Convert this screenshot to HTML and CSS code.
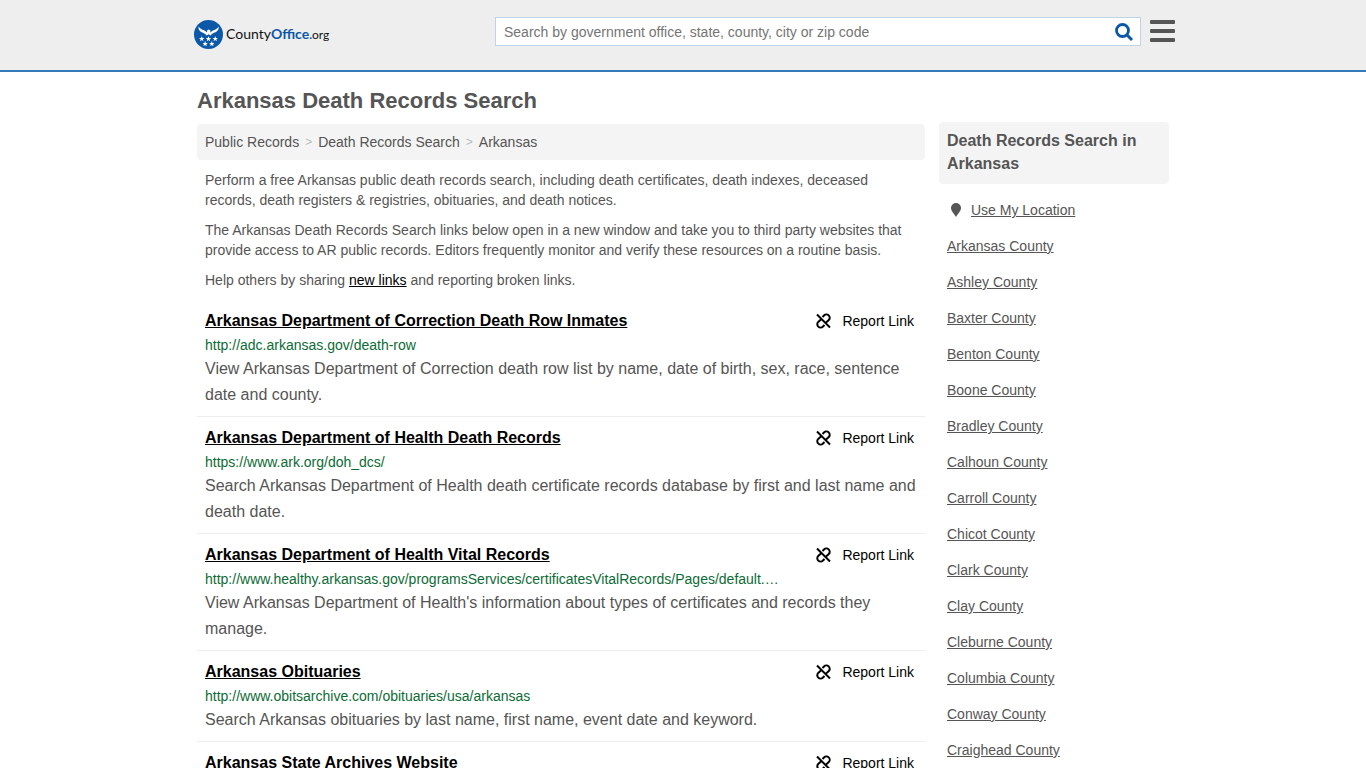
FILE: index.html
```html
<!DOCTYPE html>
<html lang="en">
<head>
    <meta charset="UTF-8">
    <meta name="viewport" content="width=device-width, initial-scale=1.0">
    <title>Arkansas Death Records Search</title>
    <link rel="stylesheet" href="styles.css">
</head>
<body>
    <!-- Shared icons -->
    <svg class="sprite" aria-hidden="true">
        <symbol id="unlink" viewBox="0 0 16 16">
            <g fill="none" stroke="#000" stroke-width="2">
                <path d="M2 1.500l13 13"/>
                <path d="M7.500 4l1.500-1.500a3.300 3.300 0 0 1 4.800 4.600L10.500 10"/>
                <path d="M9.500 12l-1.500 1.500a3.300 3.300 0 0 1-4.800-4.600L6.500 6"/>
            </g>
        </symbol>
        <symbol id="star" viewBox="0 0 10 10">
            <path fill="#fff" d="M5 0l1.300 3.500 3.700.1-2.900 2.300L8.100 9.500 5 7.400 1.900 9.500l1-3.600L0 3.600l3.700-.1z"/>
        </symbol>
    </svg>

    <header class="header">
        <div class="header-inner">
            <a class="logo" href="#">
                <svg class="logo-mark" viewBox="0 0 29 29" aria-hidden="true">
                    <circle cx="14.500" cy="14.500" r="14.500" fill="#0b57a8"/>
                    <path fill="#fff" d="M4.500 6.500c1.500 2.500 4 3.300 6.500 4.200l2 1.800.2-2.300 1.500-.7 1.600.8.1 2.200 2-1.800c2.500-.9 5-1.700 6.300-4.200.3 3-1 4.700-3.200 5.700-2 .9-3.700 1.100-4.800 3.300L14.500 14.300l-2 1.200c-1.200-2.200-3-2.400-4.900-3.300C5.500 11.200 4.200 9.500 4.500 6.500z"/>
                    <use href="#star" x="5" y="16" width="5.500" height="5.500"/>
                    <use href="#star" x="11.700" y="16" width="5.500" height="5.500"/>
                    <use href="#star" x="18.500" y="16" width="5.500" height="5.500"/>
                    <use href="#star" x="8.400" y="21" width="5.500" height="5.500"/>
                    <use href="#star" x="15.100" y="21" width="5.500" height="5.500"/>
                </svg>
                <span class="logo-text">County<b>Office</b><span class="logo-org"><b>.</b>org</span></span>
            </a>
            <form class="search">
                <input class="search-input" type="text" aria-label="Search" placeholder="Search by government office, state, county, city or zip code">
                <button class="search-btn" type="submit" aria-label="Search">
                    <svg width="20" height="20" viewBox="0 0 20 20" fill="none" stroke="#0b57a8">
                        <circle cx="8.500" cy="8.500" r="6" stroke-width="2.800"/>
                        <path d="M12.500 12.500l5.500 5.500" stroke-width="3"/>
                    </svg>
                </button>
            </form>
            <button class="menu-btn" type="button" aria-label="Menu">
                <svg width="25" height="22" viewBox="0 0 25 22" fill="#555">
                    <rect width="25" height="4" rx="1"/>
                    <rect y="9" width="25" height="4" rx="1"/>
                    <rect y="18" width="25" height="4" rx="1"/>
                </svg>
            </button>
        </div>
    </header>

    <div class="container">
        <main class="main">
            <h1>Arkansas Death Records Search</h1>
            <nav class="breadcrumb">
                <a href="#">Public Records</a>
                <span class="sep">&gt;</span>
                <a href="#">Death Records Search</a>
                <span class="sep">&gt;</span>
                <a href="#">Arkansas</a>
            </nav>
            <div class="intro">
                <p>Perform a free Arkansas public death records search, including death certificates, death indexes, deceased records, death registers &amp; registries, obituaries, and death notices.</p>
                <p>The Arkansas Death Records Search links below open in a new window and take you to third party websites that provide access to AR public records. Editors frequently monitor and verify these resources on a routine basis.</p>
                <p>Help others by sharing <a href="#">new links</a> and reporting broken links.</p>
            </div>

            <div class="record">
                <div class="record-head">
                    <a class="record-title" href="#">Arkansas Department of Correction Death Row Inmates</a>
                    <a class="report" href="#"><svg class="report-icon"><use href="#unlink"/></svg>Report Link</a>
                </div>
                <div class="record-url">http://adc.arkansas.gov/death-row</div>
                <div class="record-desc">View Arkansas Department of Correction death row list by name, date of birth, sex, race, sentence date and county.</div>
            </div>
            <div class="record">
                <div class="record-head">
                    <a class="record-title" href="#">Arkansas Department of Health Death Records</a>
                    <a class="report" href="#"><svg class="report-icon"><use href="#unlink"/></svg>Report Link</a>
                </div>
                <div class="record-url">https://www.ark.org/doh_dcs/</div>
                <div class="record-desc">Search Arkansas Department of Health death certificate records database by first and last name and death date.</div>
            </div>
            <div class="record">
                <div class="record-head">
                    <a class="record-title" href="#">Arkansas Department of Health Vital Records</a>
                    <a class="report" href="#"><svg class="report-icon"><use href="#unlink"/></svg>Report Link</a>
                </div>
                <div class="record-url">http://www.healthy.arkansas.gov/programsServices/certificatesVitalRecords/Pages/default.…</div>
                <div class="record-desc">View Arkansas Department of Health's information about types of certificates and records they manage.</div>
            </div>
            <div class="record">
                <div class="record-head">
                    <a class="record-title" href="#">Arkansas Obituaries</a>
                    <a class="report" href="#"><svg class="report-icon"><use href="#unlink"/></svg>Report Link</a>
                </div>
                <div class="record-url">http://www.obitsarchive.com/obituaries/usa/arkansas</div>
                <div class="record-desc">Search Arkansas obituaries by last name, first name, event date and keyword.</div>
            </div>
            <div class="record">
                <div class="record-head">
                    <a class="record-title" href="#">Arkansas State Archives Website</a>
                    <a class="report" href="#"><svg class="report-icon"><use href="#unlink"/></svg>Report Link</a>
                </div>
            </div>
        </main>

        <aside class="sidebar">
            <h2>Death Records Search in Arkansas</h2>
            <ul>
                <li>
                    <svg class="pin" viewBox="0 0 10 14"><path fill="#555" d="M5 0a5 5 0 0 1 5 5c0 3-3 5.500-5 9C3 10.500 0 8 0 5a5 5 0 0 1 5-5z"/></svg>
                    <a href="#">Use My Location</a>
                </li>
                <li><a href="#">Arkansas County</a></li>
                <li><a href="#">Ashley County</a></li>
                <li><a href="#">Baxter County</a></li>
                <li><a href="#">Benton County</a></li>
                <li><a href="#">Boone County</a></li>
                <li><a href="#">Bradley County</a></li>
                <li><a href="#">Calhoun County</a></li>
                <li><a href="#">Carroll County</a></li>
                <li><a href="#">Chicot County</a></li>
                <li><a href="#">Clark County</a></li>
                <li><a href="#">Clay County</a></li>
                <li><a href="#">Cleburne County</a></li>
                <li><a href="#">Columbia County</a></li>
                <li><a href="#">Conway County</a></li>
                <li><a href="#">Craighead County</a></li>
            </ul>
        </aside>
    </div>
</body>
</html>
```
FILE: styles.css
```css
* {
    box-sizing: border-box;
}
body {
    margin: 0;
    font-family: "Liberation Sans", Arial, sans-serif;
    font-size: 14px;
    line-height: 20px;
    color: #555;
    background: #fff;
}
a {
    color: inherit;
}
button {
    padding: 0;
    border: none;
    background: none;
    cursor: pointer;
}
svg {
    display: block;
}
.sprite {
    display: none;
}

/* Header */
.header {
    background: #eee;
    border-bottom: 2px solid #337ab7;
}
.header-inner {
    display: flex;
    align-items: flex-start;
    max-width: 984px;
    height: 70px;
    margin: 0 auto;
    padding: 17px 0 0 3px;
}
.logo {
    display: flex;
    align-items: center;
    gap: 3px;
    padding-top: 3px;
    text-decoration: none;
    color: #111;
}
.logo-mark {
    width: 29px;
    height: 29px;
}
.logo-text {
    font-family: Lato, sans-serif;
    font-size: 14px;
}
.logo-text b {
    color: #0b57a8;
}
.logo-org {
    font-size: 12px;
}
.search {
    display: flex;
    width: 646px;
    height: 29px;
    margin-left: auto;
    background: #fff;
    border: 1px solid #bcd4e6;
}
.search-input {
    flex: 1;
    padding: 0 8px;
    border: none;
    outline: none;
    background: none;
    font-family: inherit;
    font-size: 14px;
    color: #555;
}
.search-input::placeholder {
    color: #757575;
}
.search-btn {
    padding: 0 6px;
}
.menu-btn {
    margin: 3px 0 0 9px;
}

/* Page columns */
.container {
    display: flex;
    gap: 14px;
    max-width: 980px;
    margin: 0 auto;
    padding: 0 4px;
}
.main {
    flex: 1;
    min-width: 0;
}
h1 {
    margin: 0;
    padding: 14px 0 8px;
    font-size: 22px;
    line-height: 30px;
}
.breadcrumb {
    display: flex;
    gap: 6px;
    padding: 8px;
    background: #f4f4f4;
    border-radius: 4px;
}
.breadcrumb a {
    text-decoration: none;
}
.sep {
    font-size: 12px;
    color: #bbb;
}
.intro {
    padding: 0 8px;
}
.intro p {
    margin: 10px 0;
}
.intro a {
    color: #000;
}

/* Records */
.record {
    padding: 9px 8px 8px;
    border-bottom: 1px solid #eee;
}
.record-head {
    display: flex;
    justify-content: space-between;
    margin-bottom: 2px;
    line-height: 24px;
    color: #000;
}
.record-title {
    font-size: 16px;
    font-weight: bold;
}
.report {
    display: flex;
    align-items: center;
    gap: 11px;
    padding-right: 3px;
    text-decoration: none;
}
.report-icon {
    width: 16px;
    height: 16px;
}
.record-url {
    margin-bottom: 1px;
    color: #0b6b35;
}
.record-desc {
    font-size: 16px;
    line-height: 26px;
}

/* Sidebar */
.sidebar {
    width: 230px;
    padding-top: 50px;
}
.sidebar h2 {
    margin: 0 0 8px;
    padding: 7px 8px 9px;
    font-size: 16px;
    line-height: 23px;
    background: #f4f4f4;
    border-radius: 4px;
}
.sidebar ul {
    margin: 0;
    padding: 0 8px;
    list-style: none;
}
.sidebar li {
    display: flex;
    align-items: center;
    height: 36px;
}
.pin {
    width: 10px;
    height: 14px;
    margin: 0 10px 0 4px;
}
```
